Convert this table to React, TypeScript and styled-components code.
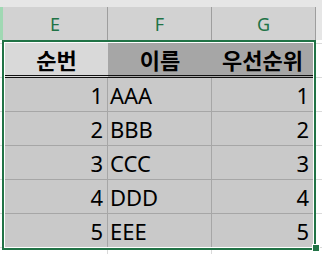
import styled, { createGlobalStyle } from 'styled-components';

const GlobalStyle = createGlobalStyle`
  html, body {
    margin: 0;
    padding: 0;
    background: #ffffff;
  }
  body {
    width: 322px;
    height: 254px;
    overflow: hidden;
    font-family: "Noto Sans", "Noto Sans CJK KR", sans-serif;
  }
`;

const records = [
  { no: 1, name: 'AAA', rank: 1 },
  { no: 2, name: 'BBB', rank: 2 },
  { no: 3, name: 'CCC', rank: 3 },
  { no: 4, name: 'DDD', rank: 4 },
  { no: 5, name: 'EEE', rank: 5 },
];

export default function App() {
  return (
    <>
      <GlobalStyle />
      <Sheet>
        <TopStrip />
        <HeaderRow>
          <RowStub />
          <ColHead $width={105}>E</ColHead>
          <ColHead $width={104}>F</ColHead>
          <ColHead $width={104}>G</ColHead>
          <HeaderRest />
        </HeaderRow>
        <Body>
          <Selection>
            <Grid>
              <TitleCell $shade="#d9d9d9">순번</TitleCell>
              <TitleCell $shade="#a6a6a6">이름</TitleCell>
              <TitleCell $shade="#a6a6a6">우선순위</TitleCell>
              {records.map((r, i) => {
                const last = i === records.length - 1;
                return [
                  <Cell key={`n${r.no}`} $align="flex-end" $last={last} $divider>
                    {r.no}
                  </Cell>,
                  <Cell key={`s${r.no}`} $align="flex-start" $last={last} $divider>
                    {r.name}
                  </Cell>,
                  <Cell key={`r${r.no}`} $align="flex-end" $last={last}>
                    {r.rank}
                  </Cell>,
                ];
              })}
            </Grid>
            <Handle />
          </Selection>
        </Body>
      </Sheet>
    </>
  );
}

const Sheet = styled.div`
  width: 322px;
  height: 254px;
  display: flex;
  flex-direction: column;
  background: #ffffff;
`;

const TopStrip = styled.div`
  height: 7px;
  background: #e6e6e6;
`;

const HeaderRow = styled.div`
  height: 33px;
  display: flex;
`;

const RowStub = styled.div`
  width: 3px;
  background: #a0d8b3;
`;

const ColHead = styled.div<{ $width: number }>`
  width: ${(p) => p.$width}px;
  box-sizing: border-box;
  border-right: 1px solid #9e9e9e;
  background: #d2d2d2;
  color: #217346;
  font-family: "Noto Sans", sans-serif;
  font-size: 18px;
  display: flex;
  align-items: center;
  justify-content: center;
`;

const HeaderRest = styled.div`
  flex: 1;
  background: #e6e6e6;
`;

/* empty sheet gridlines show around the selected block */
const Body = styled.div`
  flex: 1;
  display: flex;
  align-items: flex-start;
  padding-left: 2px;
  background:
    linear-gradient(#dadada, #dadada) 107px 0 / 1px 100% no-repeat,
    linear-gradient(#dadada, #dadada) 211px 0 / 1px 100% no-repeat,
    repeating-linear-gradient(
      to bottom,
      transparent 0 3px,
      #dadada 3px 4px,
      transparent 4px 34px
    );
`;

const Selection = styled.div`
  position: relative;
  width: 314px;
  box-sizing: border-box;
  border: 2px solid #217346;
  padding: 1px;
  background: #ffffff;
`;

const Grid = styled.div`
  display: grid;
  grid-template-columns: 103px 104px 101px;
`;

const TitleCell = styled.div<{ $shade: string }>`
  height: 32px;
  border-bottom: 3px double #111111;
  background: ${(p) => p.$shade};
  color: #000000;
  font-family: "Noto Sans CJK KR", sans-serif;
  font-weight: 700;
  font-size: 22px;
  display: flex;
  align-items: center;
  justify-content: center;
`;

const Cell = styled.div<{ $align: string; $last: boolean; $divider?: boolean }>`
  height: 33px;
  border-bottom: ${(p) => (p.$last ? 'none' : '1px solid #a6a6a6')};
  border-right: ${(p) => (p.$divider ? '1px solid #a6a6a6' : 'none')};
  background: #c9c9c9;
  color: #000000;
  font-size: 22px;
  display: flex;
  align-items: center;
  justify-content: ${(p) => p.$align};
  padding: 0 4px 0 2px;
`;

const Handle = styled.div`
  position: absolute;
  right: -5px;
  bottom: -3px;
  width: 6px;
  height: 6px;
  background: #217346;
  box-shadow: 0 0 0 1px #ffffff;
`;
